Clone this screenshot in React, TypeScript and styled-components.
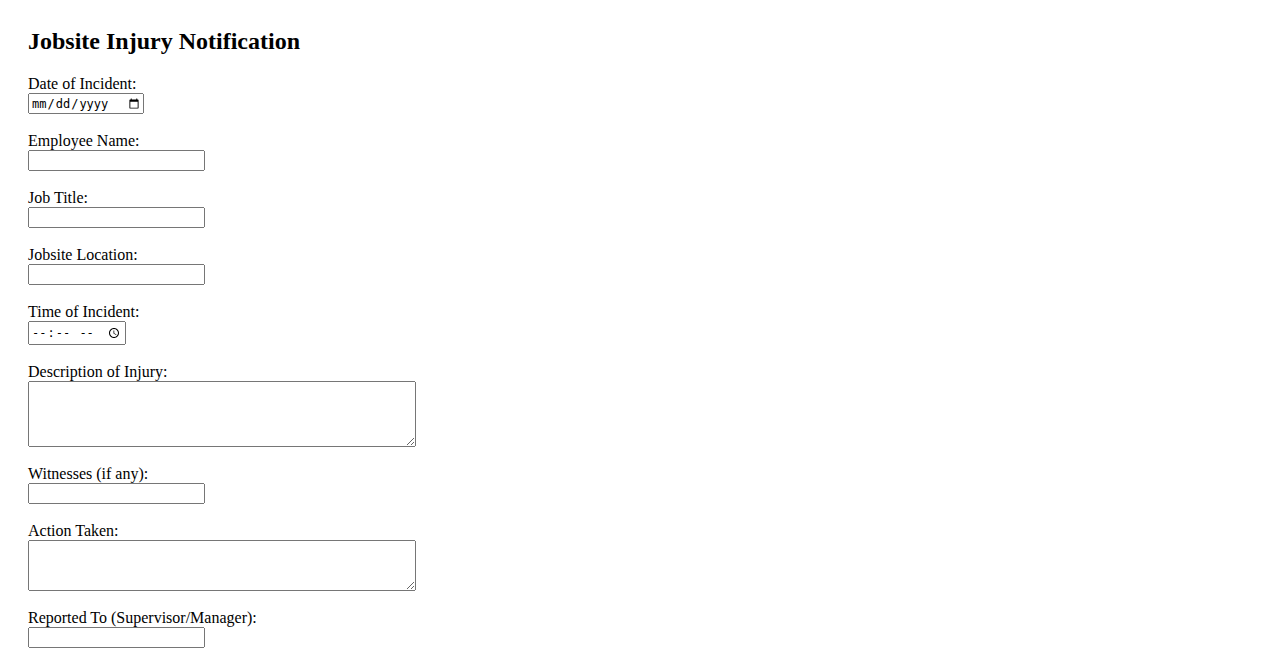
import styled, { createGlobalStyle } from 'styled-components'

const GlobalStyle = createGlobalStyle`
  body {
    margin: 0;
    padding: 28px;
    font-family: "Liberation Serif", "Times New Roman", serif;
    font-size: 16px;
    color: #000;
    background: #fff;
  }
`

const Title = styled.h2`
  margin: 0 0 21px;
  font-size: 24px;
  font-weight: bold;
  line-height: 26px;
`

const Form = styled.form`
  display: flex;
  flex-direction: column;
  align-items: flex-start;
`

const Field = styled.div`
  display: flex;
  flex-direction: column;
  align-items: flex-start;
  margin-bottom: 18px;
`

const Label = styled.label`
  display: block;
  line-height: 18px;
`

const widths: Record<string, number> = { text: 177, date: 116, time: 98 }
const heights: Record<string, number> = { text: 21, date: 21, time: 24 }

const Input = styled.input<{ $kind: string }>`
  margin: 0;
  box-sizing: border-box;
  width: ${p => widths[p.$kind]}px;
  height: ${p => heights[p.$kind]}px;
  font-size: ${p => (p.$kind === 'text' ? '13.33px' : '12px')};
`

const TextArea = styled.textarea<{ $rows: number }>`
  margin: 0;
  box-sizing: border-box;
  width: 388px;
  height: ${p => (p.$rows === 4 ? 66 : 51)}px;
`

const fields = [
  { id: 'date', label: 'Date of Incident:', kind: 'date' },
  { id: 'name', label: 'Employee Name:', kind: 'text' },
  { id: 'title', label: 'Job Title:', kind: 'text' },
  { id: 'location', label: 'Jobsite Location:', kind: 'text' },
  { id: 'time', label: 'Time of Incident:', kind: 'time' },
  { id: 'description', label: 'Description of Injury:', kind: 'area4' },
  { id: 'witnesses', label: 'Witnesses (if any):', kind: 'text' },
  { id: 'action', label: 'Action Taken:', kind: 'area3' },
  { id: 'reported', label: 'Reported To (Supervisor/Manager):', kind: 'text' },
]

export default function App() {
  return (
    <>
      <GlobalStyle />
      <Title>Jobsite Injury Notification</Title>
      <Form onSubmit={e => e.preventDefault()}>
        {fields.map(f => (
          <Field key={f.id}>
            <Label htmlFor={f.id}>{f.label}</Label>
            {f.kind === 'area4' || f.kind === 'area3' ? (
              <TextArea id={f.id} $rows={f.kind === 'area4' ? 4 : 3} />
            ) : (
              <Input id={f.id} type={f.kind} $kind={f.kind} />
            )}
          </Field>
        ))}
      </Form>
    </>
  )
}
